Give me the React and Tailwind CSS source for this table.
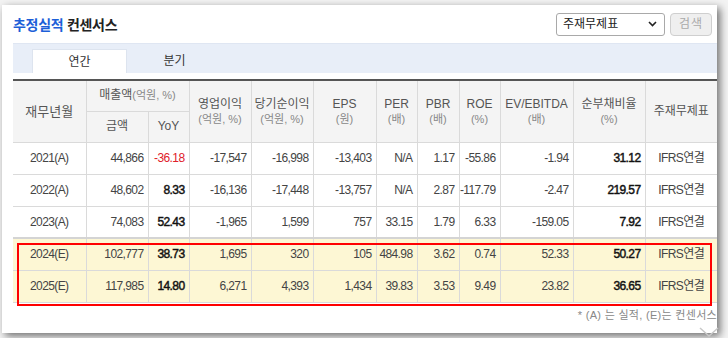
import React from 'react';

const FONT = "font-['Liberation_Sans','Noto_Sans_CJK_KR',sans-serif]";

const ROWS = [
    { year: '2021(A)', v: ['44,866', '-36.18', '-17,547', '-16,998', '-13,403', 'N/A', '1.17', '-55.86', '-1.94', '31.12'], red: true },
    { year: '2022(A)', v: ['48,602', '8.33', '-16,136', '-17,448', '-13,757', 'N/A', '2.87', '-117.79', '-2.47', '219.57'] },
    { year: '2023(A)', v: ['74,083', '52.43', '-1,965', '1,599', '757', '33.15', '1.79', '6.33', '-159.05', '7.92'] },
    { year: '2024(E)', v: ['102,777', '38.73', '1,695', '320', '105', '484.98', '3.62', '0.74', '52.33', '50.27'], est: true },
    { year: '2025(E)', v: ['117,985', '14.80', '6,271', '4,393', '1,434', '39.83', '3.53', '9.49', '23.82', '36.65'], est: true },
];

const WIDTHS = [73, 62, 41, 62, 62, 63, 41, 42, 41, 73, 72, 72];

const th = "border border-[#dadada] bg-[#f4f4f4] text-[12px] font-normal text-[#555] text-center leading-[15px] p-0";
const sub = "block text-[11px] text-[#888] leading-[14px]";

export default function App() {
    return (
        <div className={`w-[728px] h-[338px] bg-[#f3f3f3] overflow-hidden pt-[5px] pl-[2px] ${FONT}`}>
            <div className="relative w-[715px] h-[328px] bg-white shadow-[3px_3px_8px_rgba(0,0,0,0.55)] pl-[11px]">
                {/* title + select */}
                <div className="h-[38px] flex items-center justify-between pr-[5px]">
                    <h2 className="text-[14px] font-bold tracking-[-0.3px] text-[#222] pt-[3px]">
                        <span className="text-[#1d5fd8]">추정실적</span> 컨센서스
                    </h2>
                    <div className="flex items-center gap-[5px]">
                        <div className="w-[109px] h-[23px] border border-[#a9a9a9] rounded-[3px] flex items-center justify-between pl-[6px] pr-[7px] text-[12px] text-[#222]">
                            <span>주재무제표</span>
                            <svg width="9" height="6" viewBox="0 0 9 6">
                                <path d="M1 1l3.5 3.5L8 1" fill="none" stroke="#222" strokeWidth="1.6" />
                            </svg>
                        </div>
                        <div className="w-[42px] h-[23px] border border-[#cfcfcf] rounded-[4px] bg-[#efefef] flex items-center justify-center text-[12px] text-[#aaa] tracking-[1px]">
                            검색
                        </div>
                    </div>
                </div>

                {/* tabs */}
                <div className="h-[30px] bg-[#e8eef8] border-t border-[#dfe6f2] flex items-end pl-[19px]">
                    <div className="w-[95px] h-[24px] bg-white border border-b-0 border-[#dde4ef] flex items-center justify-center text-[12px] text-[#333]">연간</div>
                    <div className="w-[95px] h-[24px] flex items-center justify-center text-[12px] text-[#333]">분기</div>
                </div>

                {/* table */}
                <div className="relative mt-[6px] w-[704px]">
                    <table className="w-[704px] table-fixed border-collapse border-t-2 border-t-[#555]">
                        <colgroup>
                            {WIDTHS.map((w, i) => <col key={i} style={{ width: w }} />)}
                        </colgroup>
                        <thead>
                            <tr className="h-[31px]">
                                <th rowSpan={2} className={`${th} border-l-0 text-[13px]`}>재무년월</th>
                                <th colSpan={2} className={th}>매출액<span className="text-[11px] text-[#888]">(억원, %)</span></th>
                                <th rowSpan={2} className={th}>영업이익<span className={sub}>(억원, %)</span></th>
                                <th rowSpan={2} className={th}>당기순이익<span className={sub}>(억원, %)</span></th>
                                <th rowSpan={2} className={th}>EPS<span className={sub}>(원)</span></th>
                                <th rowSpan={2} className={th}>PER<span className={sub}>(배)</span></th>
                                <th rowSpan={2} className={th}>PBR<span className={sub}>(배)</span></th>
                                <th rowSpan={2} className={th}>ROE<span className={sub}>(%)</span></th>
                                <th rowSpan={2} className={th}>EV/EBITDA<span className={sub}>(배)</span></th>
                                <th rowSpan={2} className={th}>순부채비율<span className={sub}>(%)</span></th>
                                <th rowSpan={2} className={`${th} border-r-0`}>주재무제표</th>
                            </tr>
                            <tr className="h-[31px]">
                                <th className={th}>금액</th>
                                <th className={th}>YoY</th>
                            </tr>
                        </thead>
                        <tbody>
                            {ROWS.map((r, ri) => (
                                <tr
                                    key={r.year}
                                    className={`h-[32px] ${r.est ? 'bg-[#fdf7d4]' : 'bg-white'} ${ri === 3 ? 'border-t-2 border-t-[#d4d4d4]' : ''}`}
                                >
                                    <td className="border border-[#dadada] border-l-0 text-center text-[12px] text-[#444] tracking-[-0.6px]">{r.year}</td>
                                    {r.v.map((val, i) => (
                                        <td
                                            key={i}
                                            className={`border border-[#dadada] text-right pr-[4px] text-[12px] tracking-[-0.6px] ${
                                                i === 1 && r.red
                                                    ? 'text-[#e0202a]'
                                                    : i === 1 || i === 9
                                                    ? 'text-[#111] [-webkit-text-stroke:0.45px_#111]'
                                                    : 'text-[#444]'
                                            }`}
                                        >
                                            {val}
                                        </td>
                                    ))}
                                    <td className="border border-[#dadada] border-r-0 text-center text-[12px] text-[#444] tracking-[-0.6px]">IFRS연결</td>
                                </tr>
                            ))}
                        </tbody>
                    </table>
                    {/* estimate highlight */}
                    <div className="absolute left-[4px] top-[164px] w-[695px] h-[63px] border-2 border-[#ff0000] pointer-events-none" />
                </div>

                <p className="w-[704px] text-right text-[11px] text-[#888] mt-[4px] tracking-[0.3px]">* (A) 는 실적, (E)는 컨센서스</p>

                <svg className="absolute right-[-2px] bottom-[-4px]" width="20" height="10" viewBox="0 0 20 10">
                    <path d="M1 1l9 8 9-8" fill="none" stroke="#c8c8c8" strokeWidth="1.5" />
                </svg>
            </div>
        </div>
    );
}
